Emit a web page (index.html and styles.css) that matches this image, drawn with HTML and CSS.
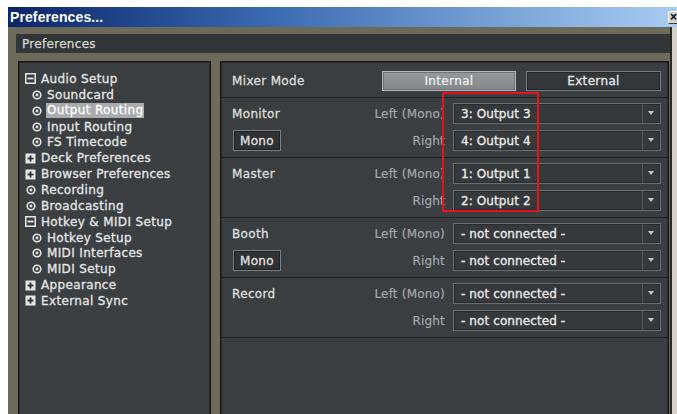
FILE: index.html
```html
<!DOCTYPE html>
<html>
<head>
<meta charset="utf-8">
<title>Preferences</title>
<link rel="stylesheet" href="styles.css">
</head>
<body>
<div class="window">
  <div class="titlebar">
    <span class="title">Preferences...</span>
    <span class="close">×</span>
  </div>
  <div class="frame">
    <div class="header">Preferences</div>
    <div class="panes">
      <ul class="tree">
        <li class="node"><svg class="ico" viewBox="0 0 11 11"><rect x="0.75" y="0.75" width="9.5" height="9.5" fill="#3b3f42" stroke="#e6e6e6" stroke-width="1.5"/><rect x="2.5" y="4.6" width="6" height="1.8" fill="#e6e6e6"/></svg><span>Audio Setup</span></li>
        <li class="leaf sub"><svg class="dot" viewBox="0 0 10 10"><circle cx="5" cy="5" r="3.8" fill="none" stroke="#e6e6e6" stroke-width="1.6"/><circle cx="5" cy="5" r="1.4" fill="#e6e6e6"/></svg><span>Soundcard</span></li>
        <li class="leaf sub"><svg class="dot" viewBox="0 0 10 10"><circle cx="5" cy="5" r="3.8" fill="none" stroke="#e6e6e6" stroke-width="1.6"/><circle cx="5" cy="5" r="1.4" fill="#e6e6e6"/></svg><span class="selected">Output Routing</span></li>
        <li class="leaf sub"><svg class="dot" viewBox="0 0 10 10"><circle cx="5" cy="5" r="3.8" fill="none" stroke="#e6e6e6" stroke-width="1.6"/><circle cx="5" cy="5" r="1.4" fill="#e6e6e6"/></svg><span>Input Routing</span></li>
        <li class="leaf sub"><svg class="dot" viewBox="0 0 10 10"><circle cx="5" cy="5" r="3.8" fill="none" stroke="#e6e6e6" stroke-width="1.6"/><circle cx="5" cy="5" r="1.4" fill="#e6e6e6"/></svg><span>FS Timecode</span></li>
        <li class="node"><svg class="ico" viewBox="0 0 11 11"><rect x="0.5" y="0.5" width="10" height="10" fill="#e6e6e6"/><rect x="2.5" y="4.6" width="6" height="1.8" fill="#2c2f31"/><rect x="4.6" y="2.5" width="1.8" height="6" fill="#2c2f31"/></svg><span>Deck Preferences</span></li>
        <li class="node"><svg class="ico" viewBox="0 0 11 11"><rect x="0.5" y="0.5" width="10" height="10" fill="#e6e6e6"/><rect x="2.5" y="4.6" width="6" height="1.8" fill="#2c2f31"/><rect x="4.6" y="2.5" width="1.8" height="6" fill="#2c2f31"/></svg><span>Browser Preferences</span></li>
        <li class="leaf top"><svg class="dot" viewBox="0 0 10 10"><circle cx="5" cy="5" r="3.8" fill="none" stroke="#e6e6e6" stroke-width="1.6"/><circle cx="5" cy="5" r="1.4" fill="#e6e6e6"/></svg><span>Recording</span></li>
        <li class="leaf top"><svg class="dot" viewBox="0 0 10 10"><circle cx="5" cy="5" r="3.8" fill="none" stroke="#e6e6e6" stroke-width="1.6"/><circle cx="5" cy="5" r="1.4" fill="#e6e6e6"/></svg><span>Broadcasting</span></li>
        <li class="node"><svg class="ico" viewBox="0 0 11 11"><rect x="0.75" y="0.75" width="9.5" height="9.5" fill="#3b3f42" stroke="#e6e6e6" stroke-width="1.5"/><rect x="2.5" y="4.6" width="6" height="1.8" fill="#e6e6e6"/></svg><span>Hotkey &amp; MIDI Setup</span></li>
        <li class="leaf sub"><svg class="dot" viewBox="0 0 10 10"><circle cx="5" cy="5" r="3.8" fill="none" stroke="#e6e6e6" stroke-width="1.6"/><circle cx="5" cy="5" r="1.4" fill="#e6e6e6"/></svg><span>Hotkey Setup</span></li>
        <li class="leaf sub"><svg class="dot" viewBox="0 0 10 10"><circle cx="5" cy="5" r="3.8" fill="none" stroke="#e6e6e6" stroke-width="1.6"/><circle cx="5" cy="5" r="1.4" fill="#e6e6e6"/></svg><span>MIDI Interfaces</span></li>
        <li class="leaf sub"><svg class="dot" viewBox="0 0 10 10"><circle cx="5" cy="5" r="3.8" fill="none" stroke="#e6e6e6" stroke-width="1.6"/><circle cx="5" cy="5" r="1.4" fill="#e6e6e6"/></svg><span>MIDI Setup</span></li>
        <li class="node"><svg class="ico" viewBox="0 0 11 11"><rect x="0.5" y="0.5" width="10" height="10" fill="#e6e6e6"/><rect x="2.5" y="4.6" width="6" height="1.8" fill="#2c2f31"/><rect x="4.6" y="2.5" width="1.8" height="6" fill="#2c2f31"/></svg><span>Appearance</span></li>
        <li class="node"><svg class="ico" viewBox="0 0 11 11"><rect x="0.5" y="0.5" width="10" height="10" fill="#e6e6e6"/><rect x="2.5" y="4.6" width="6" height="1.8" fill="#2c2f31"/><rect x="4.6" y="2.5" width="1.8" height="6" fill="#2c2f31"/></svg><span>External Sync</span></li>
      </ul>

      <div class="routing">
        <div class="mode">
          <span class="name">Mixer Mode</span>
          <span class="toggle on">Internal</span>
          <span class="toggle">External</span>
        </div>

        <div class="section">
          <span class="name">Monitor</span>
          <span class="chan">Left (Mono)</span>
          <div class="select"><span class="value">3: Output 3</span><span class="arrow"></span></div>
          <span class="name"><span class="mono">Mono</span></span>
          <span class="chan">Right</span>
          <div class="select"><span class="value">4: Output 4</span><span class="arrow"></span></div>
        </div>

        <div class="section">
          <span class="name">Master</span>
          <span class="chan">Left (Mono)</span>
          <div class="select"><span class="value">1: Output 1</span><span class="arrow"></span></div>
          <span class="name"></span>
          <span class="chan">Right</span>
          <div class="select"><span class="value">2: Output 2</span><span class="arrow"></span></div>
        </div>

        <div class="section">
          <span class="name">Booth</span>
          <span class="chan">Left (Mono)</span>
          <div class="select"><span class="value">- not connected -</span><span class="arrow"></span></div>
          <span class="name"><span class="mono">Mono</span></span>
          <span class="chan">Right</span>
          <div class="select"><span class="value">- not connected -</span><span class="arrow"></span></div>
        </div>

        <div class="section">
          <span class="name">Record</span>
          <span class="chan">Left (Mono)</span>
          <div class="select"><span class="value">- not connected -</span><span class="arrow"></span></div>
          <span class="name"></span>
          <span class="chan">Right</span>
          <div class="select"><span class="value">- not connected -</span><span class="arrow"></span></div>
        </div>

        <div class="callout"></div>
      </div>
    </div>
  </div>
</div>
</body>
</html>
```

FILE: styles.css
```css
* {
  box-sizing: border-box;
}

html, body {
  margin: 0;
  padding: 0;
  background: #ffffff;
  overflow: hidden;
}

body {
  width: 677px;
  height: 414px;
  font-family: "DejaVu Sans", Verdana, sans-serif;
  font-size: 12px;
}

.window {
  margin: 7px 0 0 8px;
  width: 669px;
  height: 407px;
  background: #d4d0c8;
  overflow: hidden;
}

/* classic caption bar */
.titlebar {
  height: 20px;
  display: flex;
  align-items: center;
  justify-content: space-between;
  background: linear-gradient(to right, #0a246a 0%, #3c6cb2 40%, #a8ccf2 100%);
  padding-left: 2px;
}

.title {
  font-family: "Liberation Sans", Arial, sans-serif;
  font-weight: bold;
  font-size: 14px;
  color: #ffffff;
  letter-spacing: 0.1px;
}

.close {
  width: 14px;
  height: 13px;
  margin-right: -5px;
  margin-top: 1px;
  background: #d4d0c8;
  border: 1px solid;
  border-color: #ffffff #404040 #404040 #ffffff;
  font-family: "Liberation Sans", Arial, sans-serif;
  font-weight: bold;
  font-size: 12px;
  line-height: 10px;
  color: #000;
  padding-left: 1px;
}

/* olive app frame */
.frame {
  width: 664px;
  height: 387px;
  background: #6d6a5a;
  border-right: 2px solid #2a2a25;
  padding: 7px 0 0 8px;
}

.header {
  height: 19px;
  background: #333639;
  color: #d6d6d6;
  padding-left: 6px;
  line-height: 20px;
  font-size: 12px;
  letter-spacing: 0.3px;
  -webkit-text-stroke: 0.25px #d6d6d6;
}

.panes {
  margin: 8px 0 0 2px;
  display: grid;
  grid-template-columns: 193px 449px;
  column-gap: 9px;
  height: 380px;
}

/* left navigation tree */
.tree {
  list-style: none;
  margin: 0;
  padding: 9px 0 0 6px;
  background: #3b3f42;
  border: 1px solid #141516;
  box-shadow: inset 0 0 0 1px #2a2d2f;
  color: #e6e6e6;
  letter-spacing: 0.35px;
  -webkit-text-stroke: 0.3px #e6e6e6;
}

.tree li {
  height: 15.86px;
  display: flex;
  align-items: center;
  white-space: nowrap;
}

.tree .ico {
  width: 11px;
  height: 11px;
  margin-right: 5px;
  flex: none;
}

.tree .dot {
  width: 10px;
  height: 10px;
  margin-right: 5px;
  flex: none;
}

.tree .top {
  padding-left: 1px;
}

.tree .sub {
  padding-left: 7px;
}

.tree .selected {
  background: #a9abad;
  color: #ffffff;
  -webkit-text-stroke: 0.3px #ffffff;
  padding: 0 1px;
  margin-left: -1px;
  line-height: 15px;
}

/* right routing panel */
.routing {
  position: relative;
  background: #3a3e41;
  border: 1px solid #141516;
  box-shadow: inset 0 0 0 1px #2a2d2f;
  letter-spacing: 0.35px;
}

.name {
  color: #dedede;
  -webkit-text-stroke: 0.3px #dedede;
  display: flex;
  align-items: center;
}

.mode {
  display: grid;
  grid-template-columns: 1fr 134px 135px;
  column-gap: 10px;
  align-items: center;
  padding: 9px 7px 6px 11px;
  border-bottom: 1px solid #1c1e20;
}

.toggle {
  height: 20px;
  border: 1px solid #7a7d80;
  background: #34373a;
  color: #e6e6e6;
  -webkit-text-stroke: 0.3px #e6e6e6;
  display: flex;
  align-items: center;
  justify-content: center;
  box-shadow: inset 0 0 0 1px #25282a;
}

.toggle.on {
  background: linear-gradient(#979a9c, #85888a);
  border-color: #b8babc;
  box-shadow: inset 0 0 0 1px #6e7173;
  color: #f4f4f4;
  -webkit-text-stroke: 0.2px #f4f4f4;
}

.section {
  display: grid;
  grid-template-columns: 1fr auto 208px;
  grid-template-rows: 21px 21px;
  column-gap: 8px;
  row-gap: 6px;
  align-items: center;
  padding: 5px 7px 6px 11px;
  border-bottom: 1px solid #1c1e20;
}

.chan {
  color: #a6a8aa;
  -webkit-text-stroke: 0.2px #a6a8aa;
  text-align: right;
  letter-spacing: 0.2px;
}

.mono {
  width: 48px;
  height: 21px;
  margin-left: 1px;
  border: 1px solid #7c7f82;
  background: #2f3235;
  box-shadow: inset 0 0 0 1px #1f2123;
  color: #e2e2e2;
  display: flex;
  align-items: center;
  justify-content: center;
}

.select {
  height: 21px;
  display: flex;
  border: 1px solid #6a6d70;
  background: #35393c;
  box-shadow: inset 0 0 0 1px #2a2d30;
}

.select .value {
  flex: 1;
  display: flex;
  align-items: center;
  padding-left: 7px;
  color: #ececec;
  -webkit-text-stroke: 0.3px #ececec;
  letter-spacing: 0.1px;
  white-space: nowrap;
}

.select .arrow {
  width: 18px;
  border-left: 1px solid #54575a;
  position: relative;
}

.select .arrow::after {
  content: "";
  position: absolute;
  left: 5px;
  top: 7px;
  border-left: 3px solid transparent;
  border-right: 3px solid transparent;
  border-top: 4px solid #c8c8c8;
}

/* red highlight drawn over the output column */
.callout {
  position: absolute;
  left: 221px;
  top: 30px;
  width: 97px;
  height: 120px;
  border: 2px solid #e3141a;
}
```
